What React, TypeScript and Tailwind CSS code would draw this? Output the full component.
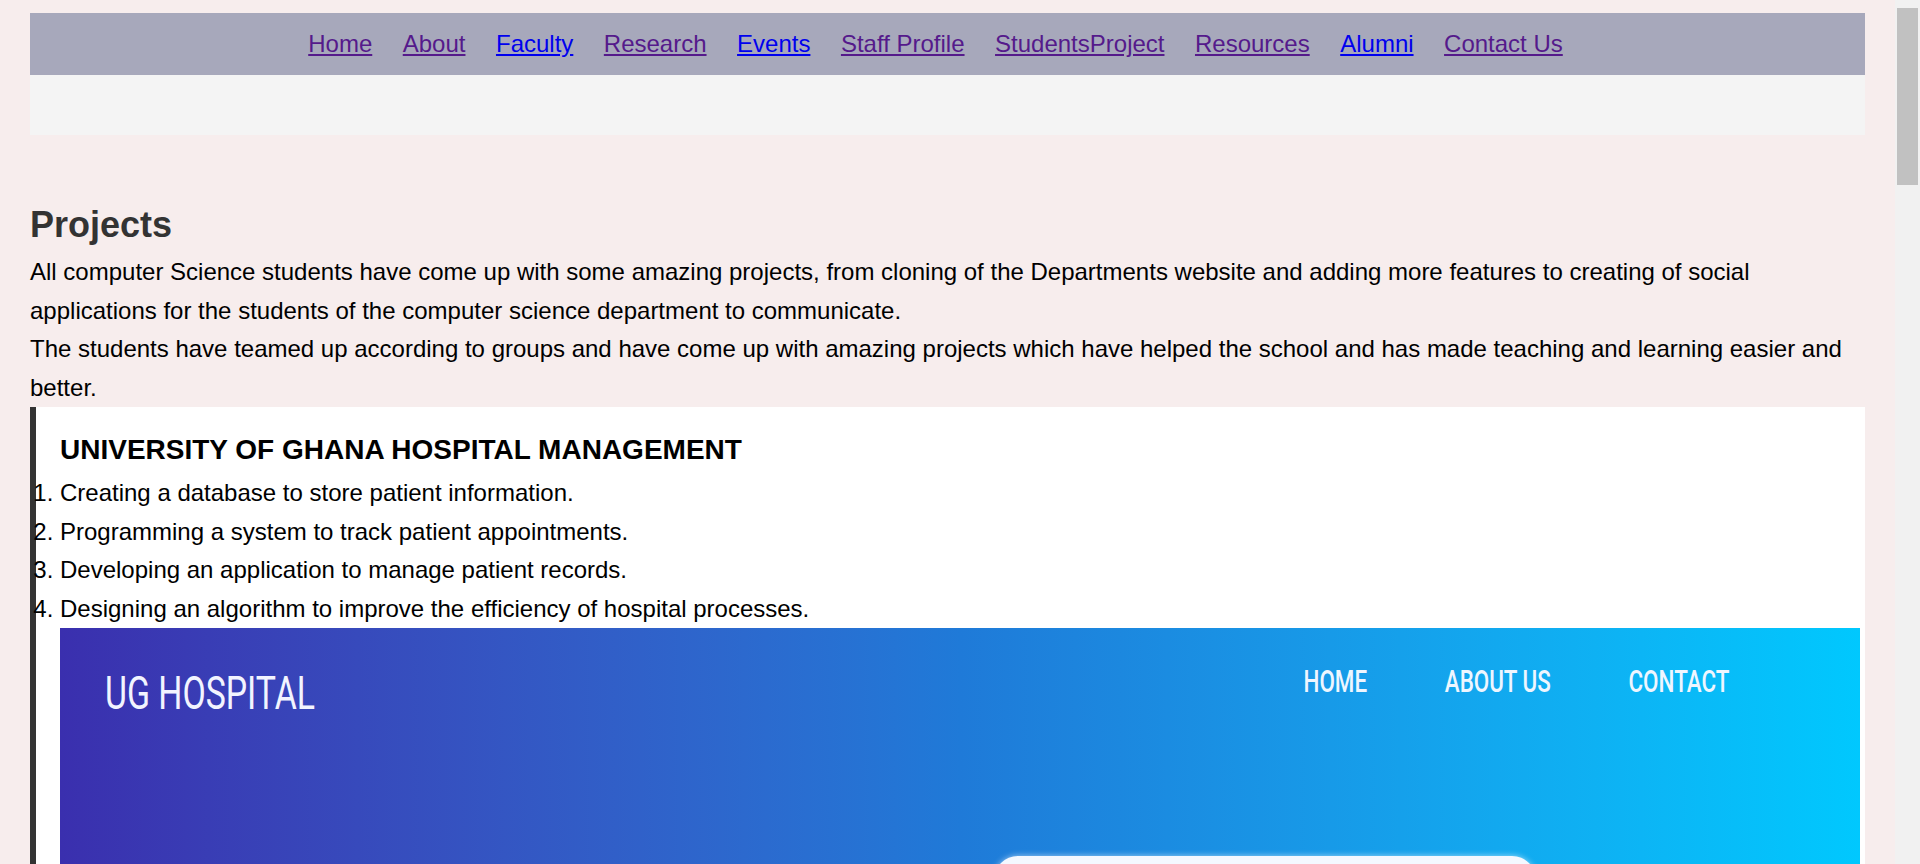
const navLinks = [
  { label: 'Home', visited: true },
  { label: 'About', visited: true },
  { label: 'Faculty', visited: false },
  { label: 'Research', visited: true },
  { label: 'Events', visited: false },
  { label: 'Staff Profile', visited: true },
  { label: 'StudentsProject', visited: true },
  { label: 'Resources', visited: true },
  { label: 'Alumni', visited: false },
  { label: 'Contact Us', visited: true },
];

const tasks = [
  'Creating a database to store patient information.',
  'Programming a system to track patient appointments.',
  'Developing an application to manage patient records.',
  'Designing an algorithm to improve the efficiency of hospital processes.',
];

// screenshot of the students' site, drawn as a flat gradient banner
function HospitalShot() {
  return (
    <div className="h-[900px] w-[1800px] bg-linear-to-r from-[#3a2fae] via-[#1f7ad8] to-[#00c8fe] pt-[37px] pl-[45px] pr-[131px] font-['Roboto','DejaVu_Sans',sans-serif] text-white">
      <div className="flex items-start justify-between">
        <span className="mt-[5px] inline-block origin-left scale-x-[0.735] text-[46px] leading-none text-[#f2f4ff]">UG HOSPITAL</span>
        <div className="flex origin-right scale-x-[0.7] gap-[111px] text-[32px] leading-none font-medium text-[#eef6ff]">
          <span>HOME</span>
          <span>ABOUT US</span>
          <span>CONTACT</span>
        </div>
      </div>
      <div className="mt-[140px] ml-[889px] h-[320px] w-[542px] rounded-[24px] bg-[#f4f8ff] shadow-[0_0_6px_rgba(255,255,255,0.6)]" />
    </div>
  );
}

export default function App() {
  return (
    <div className="flex h-screen overflow-hidden bg-[#f7eded] font-['Liberation_Sans',Arial,sans-serif] text-black">
      <div className="flex-1 overflow-y-auto [scrollbar-width:none]">
        <div className="px-[30px] pt-[13px] pb-[60px]">
          <header>
            <nav className="flex h-[62px] items-center justify-center gap-[30.5px] bg-[#a7a8bb] pr-[24px] text-[24px]">
              {navLinks.map((l) => (
                <a key={l.label} href="#" className={`underline ${l.visited ? 'text-[#551a8b]' : 'text-[#0000ee]'}`}>
                  {l.label}
                </a>
              ))}
            </nav>
            <div className="h-[60px] bg-[#f4f4f4]" />
          </header>

          <main className="mt-[70px]">
            <h2 className="text-[36px] leading-[40px] font-bold text-[#333]">Projects</h2>
            <div className="mt-[8px] text-[24px] leading-[38.5px]">
              <p>
                All computer Science students have come up with some amazing projects, from cloning of the Departments website and adding more features to creating of social applications for the students of the computer science department to communicate.
              </p>
              <p>
                The students have teamed up according to groups and have come up with amazing projects which have helped the school and has made teaching and learning easier and better.
              </p>
            </div>

            <section className="border-l-[6px] border-[#333] bg-white pt-[23px] pr-[5px] pl-[24px]">
              <h3 className="text-[28px] leading-[40px] font-bold">UNIVERSITY OF GHANA HOSPITAL MANAGEMENT</h3>
              <ol className="mt-[4px] list-decimal text-[24px] leading-[38.5px]">
                {tasks.map((t) => (
                  <li key={t}>{t}</li>
                ))}
              </ol>
              <HospitalShot />
            </section>
          </main>
        </div>
      </div>

      {/* page scrollbar */}
      <aside className="w-[25px] shrink-0 bg-[#f1f1f1] pt-[8px] pl-[2px]">
        <div className="h-[177px] w-[21px] bg-[#c1c1c1]" />
      </aside>
    </div>
  );
}
